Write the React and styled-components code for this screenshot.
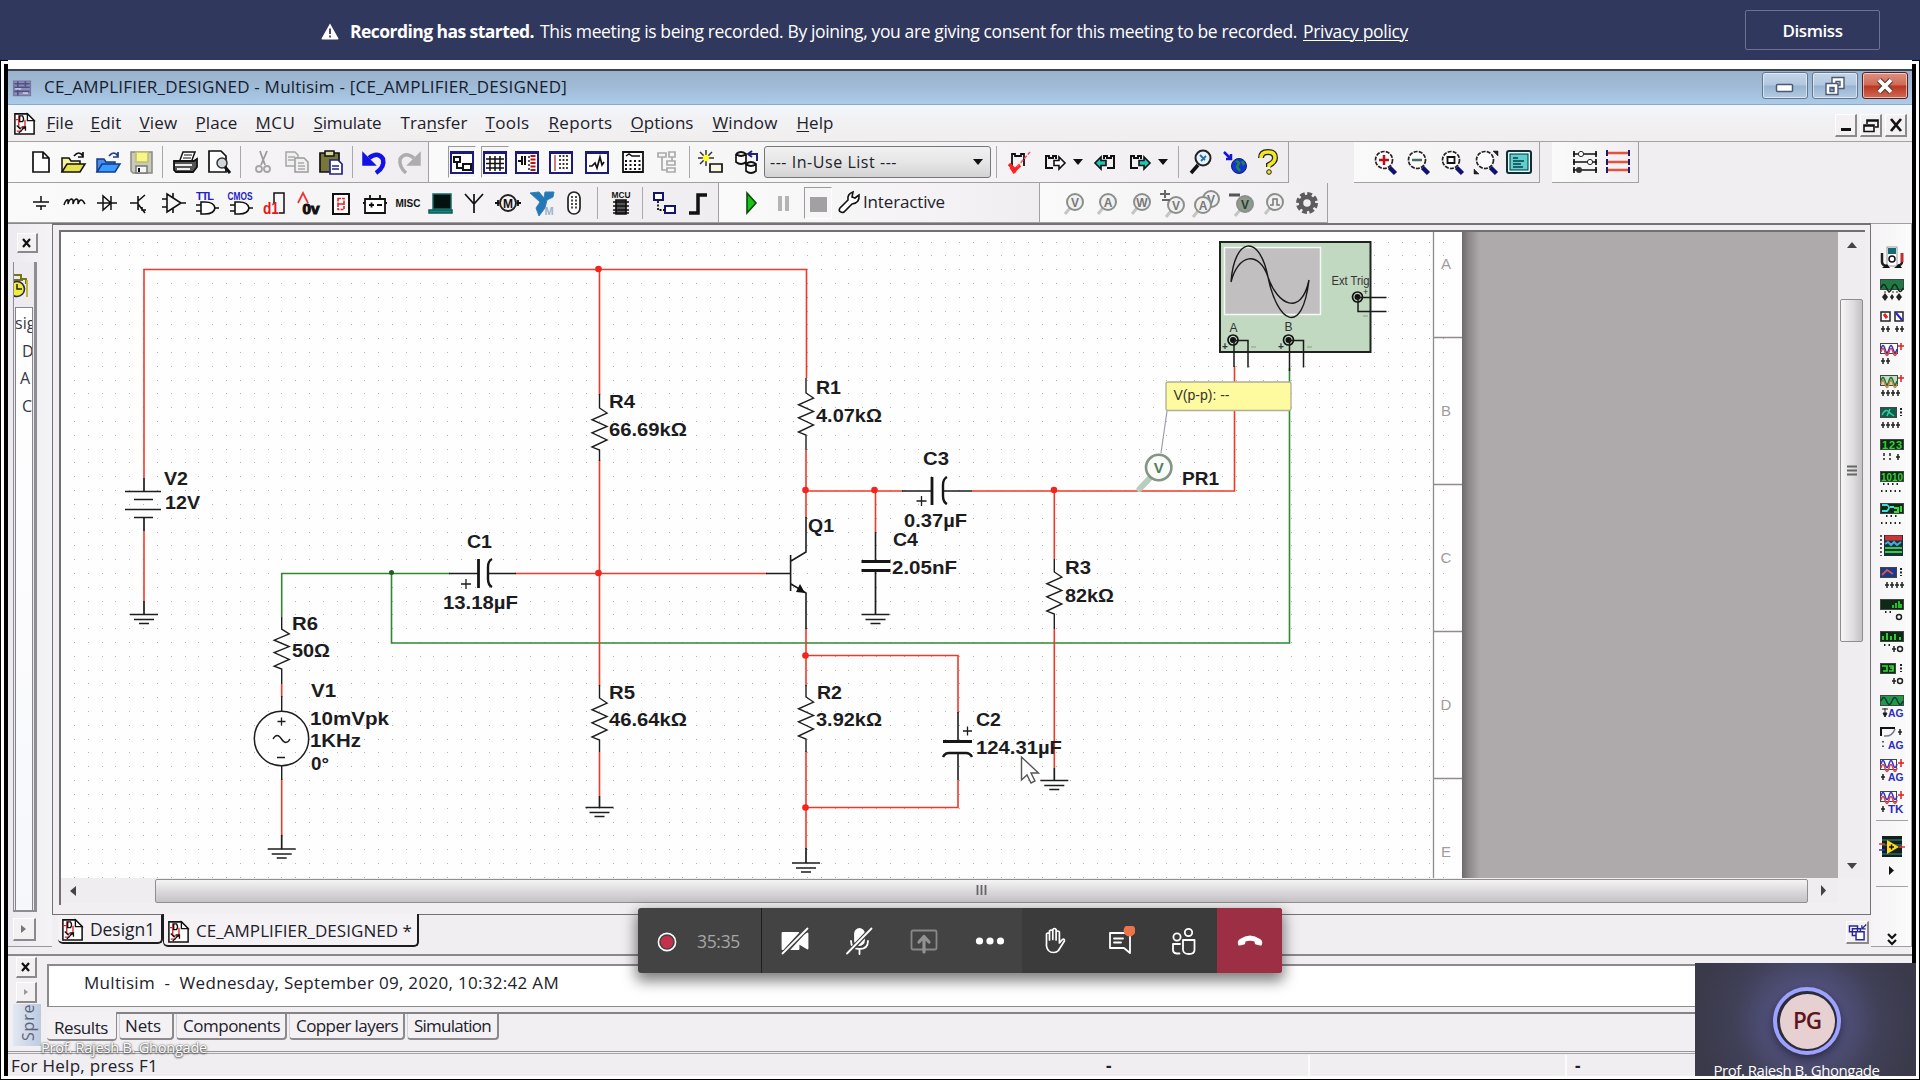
import React, { useLayoutEffect, useRef, useState } from "react";
import styled, { createGlobalStyle, css } from "styled-components";

const UI = `"Open Sans", "Noto Sans", sans-serif`;
const ARIAL = `"Liberation Sans", Arial, sans-serif`;

const Global = createGlobalStyle`
  * { box-sizing: border-box; }
  html, body { margin: 0; padding: 0; background: #fff; overflow: hidden; }
  body { font-family: ${UI}; color: #20212b; }
`;

/* ---------- text that tracks itself to a given measure ---------- */
const TextSpan = styled.span`
  display: inline-block;
  flex: none;
  white-space: pre;
  font-size: ${(p) => p.$size || 17}px;
  font-weight: ${(p) => p.$weight || 400};
  line-height: 1.3;
  u { text-underline-offset: 2px; text-decoration-thickness: 1px; }
`;

function Label({ width, size, weight, children, className }) {
  const ref = useRef(null);
  const [spacing, setSpacing] = useState(0);
  useLayoutEffect(() => {
    const el = ref.current;
    if (!width || !el) return;
    const count = el.textContent.length;
    setSpacing((width - el.getBoundingClientRect().width) / count);
  }, [width]);
  return (
    <TextSpan ref={ref} className={className} $size={size} $weight={weight} style={{ letterSpacing: spacing }}>
      {children}
    </TextSpan>
  );
}

/* ---------- page shell ---------- */
const Screen = styled.div`
  width: 1920px;
  height: 1080px;
  display: flex;
  flex-direction: column;
  overflow: hidden;
  position: relative;
`;
const Banner = styled.header`
  flex: none;
  height: 60px;
  background: #31385e;
  color: #fff;
  display: flex;
  align-items: center;
  padding: 2px 40px 0 321px;
`;
const BannerText = styled.div`
  display: flex;
  flex: 1;
  gap: 6px;
  margin-left: 11px;
`;
const LinkLabel = styled(Label)`
  text-decoration: underline;
  text-underline-offset: 2px;
  text-decoration-thickness: 1px;
`;
const Dismiss = styled.button`
  width: 135px;
  height: 40px;
  margin-bottom: 2px;
  border: 1px solid #6d7290;
  border-radius: 2px;
  background: transparent;
  color: #fff;
  font-family: ${UI};
  padding: 2px 0 0;
`;
const ShareFrame = styled.main`
  flex: 1;
  min-height: 0;
  padding: 4px 3px 3px;
  border: 1px solid #000;
  border-top: 0;
  background: linear-gradient(#000, #000) 0 0 / 7px 1px no-repeat, linear-gradient(#000, #000) 100% 0 / 7px 1px no-repeat, #fff;
`;
const AppWindow = styled.div`
  height: 1012px;
  border: solid #000;
  border-width: 0 4px;
  padding-top: 5px;
  background: #fff;
  display: flex;
  flex-direction: column;
`;

/* ---------- title + menu ---------- */
const TitleBar = styled.div`
  flex: none;
  height: 36px;
  border-top: 2px solid #3b4252;
  border-bottom: 1px solid #8fa9c2;
  background: linear-gradient(#9ab3cd, #9fbad5 45%, #abcbe9);
  display: flex;
  align-items: center;
  padding: 0 4px 0 3px;
`;
const TitleText = styled.div`flex: 1; padding-left: 11px; color: #151c30; display: flex;`;
const WinButtons = styled.div`display: flex; gap: 4px; align-self: flex-start; padding-top: 1px;`;
const WinButton = styled.div`
  width: 46px;
  height: 27px;
  border: 1px solid ${(p) => (p.$close ? "#5b1d22" : "#61778f")};
  border-radius: 3px;
  box-shadow: inset 0 0 0 1px rgba(255, 255, 255, 0.55);
  background: ${(p) => (p.$close
    ? "linear-gradient(#dc9182, #cf6a55 48%, #bb3620 52%, #cf6b55)"
    : "linear-gradient(#c3d5e8, #b2c7df 48%, #98b3d0 52%, #b3cbe4)")};
  display: grid;
  place-items: center;
`;
const MenuBar = styled.nav`
  flex: none;
  height: 37px;
  background: linear-gradient(#f0f7fd, #f2f1f3 40%, #f1eeee);
  border-bottom: 1px solid #a5a2a3;
  display: flex;
  align-items: center;
  padding: 1px 5px 0 4px;
`;
const MenuItem = styled.div`
  flex: none;
  width: ${(p) => p.$w}px;
`;
const MdiButtons = styled.div`display: flex; gap: 3px; margin: 4px 0 0 auto;`;
const SmallButton = styled.div`
  flex: none;
  width: ${(p) => p.$w || 22}px;
  height: ${(p) => p.$h || 23}px;
  border: solid;
  border-width: 1px 2px 2px 1px;
  border-color: #fff #8c898a #8c898a #fff;
  background: #f3f1f2;
  display: grid;
  place-items: center;
  margin-left: ${(p) => p.$ml || 0}px;
  margin-top: ${(p) => p.$mt || 0}px;
`;

/* ---------- toolbars ---------- */
const ToolRow = styled.div`
  flex: none;
  display: flex;
  height: ${(p) => p.$h}px;
  background: #f0eef0;
`;
const ToolGroup = styled.div`
  flex: none;
  width: ${(p) => p.$w}px;
  margin-left: ${(p) => p.$ml || 0}px;
  display: flex;
  align-items: center;
  border: solid #a3a0a2;
  border-width: 0 1px 1px 0;
  background: linear-gradient(90deg, #fafafa, #f4f2f4 70%, #efedef);
`;
const ToolSlot = styled.div`
  flex: none;
  width: 28px;
  height: 32px;
  margin-left: ${(p) => p.$gap}px;
  display: grid;
  place-items: center;
  border: 1px solid transparent;
  ${(p) => p.$pressed && css`
    border-color: #9d9a9d #fff #fff #9d9a9d;
    background: #f7f6f7;
  `}
`;
const Divider = styled.div`
  flex: none;
  width: 1px;
  height: 32px;
  background: #aba8aa;
  margin-left: ${(p) => p.$gap}px;
`;
const Combo = styled.div`
  flex: none;
  width: 227px;
  height: 32px;
  margin-left: ${(p) => p.$gap}px;
  border: 1px solid #75767a;
  border-radius: 3px;
  background: linear-gradient(#f1f1f1, #e6e6e6 50%, #d3d3d3);
  display: flex;
  align-items: center;
  justify-content: space-between;
  padding: 0 7px 0 5px;
`;
const Spacer = styled.div`
  flex: none;
  width: ${(p) => p.$w}px;
  height: ${(p) => (p.$h ? `${p.$h}px` : "auto")};
`;
const CaretSlot = styled.div`
  flex: none;
  width: 10px;
  height: 6px;
  display: flex;
  margin-left: ${(p) => p.$gap}px;
`;

/* ---------- body ---------- */
const Body = styled.div`flex: none; height: 731px; display: flex; background: #f1eef1;`;
const LeftDock = styled.div`
  flex: none;
  width: 44px;
  height: 724px;
  border-bottom: 1px solid #9b989a;
  border-top: 1px solid #8c898a;
  padding: 9px 0 0 5px;
  background: linear-gradient(90deg, #eceaf0, #f4f3f5);
`;
const DockPanel = styled.div`
  width: 24px;
  height: 650px;
  margin-top: 9px;
  border: solid #8e8d92;
  border-width: 0 3px 2px 1px;
  background: #edebef;
  padding-top: 10px;
  overflow: hidden;
`;
const DockList = styled.div`
  margin: 4px 0 0 1px;
  width: 18px;
  height: 608px;
  border: 1px solid #85868b;
  background: linear-gradient(#fff, #f6f7fb);
  padding: 2px 0 0 3px;
  overflow: hidden;
  font-size: 16px;
  line-height: 27.5px;
  color: #343846;
`;
const DockLine = styled.div`white-space: nowrap; margin-left: ${(p) => p.$ml || 0}px;`;
const Center = styled.div`flex: none; width: 1819px; display: flex; flex-direction: column;`;
const MdiFrame = styled.div`
  height: 692px;
  border: solid #757275;
  border-width: 2px 1px 1px 1px;
  padding: 5px 5px 0 6px;
  background: #f1eff1;
`;
const MdiInner = styled.div`
  border: solid #727073;
  border-width: 2px 0 0 2px;
  width: 1806px;
  height: 675px;
  display: grid;
  grid-template-columns: 1777px 27px;
  grid-template-rows: 646px 25px;
`;
const Canvas = styled.div`
  overflow: hidden;
  display: flex;
  background: linear-gradient(90deg, #6f6b6d 1401px, #8d898b 1408px, #aeaaac 1419px, #aeaaac);
`;
const VScroll = styled.div`
  display: flex;
  flex-direction: column;
  align-items: center;
  background: #efedef;
  padding-top: 9px;
`;
const VThumb = styled.div`
  flex: none;
  width: 23px;
  height: 343px;
  margin: 51px 0 221px;
  border: 1px solid #8f8c8f;
  border-radius: 2px;
  background: linear-gradient(90deg, #f8f7f8, #dddbdd 60%, #c4c1c4);
  display: grid;
  place-items: center;
`;
const HScroll = styled.div`
  display: flex;
  align-items: center;
  background: #efedef;
  padding-left: 9px;
`;
const HThumb = styled.div`
  width: 1653px;
  height: 24px;
  margin: 0 13px 0 78px;
  border: 1px solid #918e91;
  border-radius: 2px;
  background: linear-gradient(#f6f5f6, #dbd9db 50%, #c6c3c6);
  display: grid;
  place-items: center;
`;
const Tabs = styled.div`
  flex: 1;
  display: flex;
  align-items: flex-start;
  padding-left: 6px;
`;
const DocTab = styled.div`
  flex: none;
  width: ${(p) => p.$w}px;
  height: ${(p) => (p.$active ? 33 : 30)}px;
  margin-top: -1px;
  border: solid #1d1c1e;
  border-width: ${(p) => (p.$active ? "0 2px 2px 1px" : "1px 2px 2px 0")};
  border-color: ${(p) => (p.$active ? "#1d1c1e" : "#757275 #1d1c1e #1d1c1e #1d1c1e")};
  border-radius: 0 0 5px 5px;
  background: #f4f2f4;
  display: flex;
  align-items: center;
  gap: 5px;
  padding: ${(p) => (p.$active ? "3px 0 0 2px" : "2px 0 0 2px")};
`;
const RightBar = styled.div`
  flex: 1;
  height: 724px;
  border: solid #a09da0;
  border-width: 1px 1px 1px 0;
  background: linear-gradient(90deg, #f5f3f5, #fbfbfb);
  display: flex;
  flex-direction: column;
  align-items: center;
  padding: 18px 0 0 1px;
`;
const Instrument = styled.div`height: 32px; flex: none; display: grid; place-items: center;`;
const Rule = styled.div`height: 1px; flex: none; width: 32px; background: #a5a2a5; margin: ${(p) => p.$m};`;

/* ---------- spreadsheet + status ---------- */
const Sheet = styled.div`
  flex: none;
  height: 97px;
  border-top: 2px solid #8b888b;
  background: #f2eff3;
  display: flex;
`;
const SheetDock = styled.div`flex: none; width: 39px; padding: 1px 0 0 8px; overflow: hidden;`;
const SheetCaption = styled.div`
  margin: 1px 0 0 -3px;
  width: 28px;
  height: 42px;
  background: linear-gradient(90deg, #bccadf, #e2e8f3);
  writing-mode: vertical-rl;
  transform: rotate(180deg);
  font-size: 16px;
  line-height: 30px;
  letter-spacing: 0.8px;
  color: #5b6377;
  overflow: hidden;
  padding-top: 5px;
`;
const SheetMain = styled.div`flex: 1; padding-top: 8px;`;
const Output = styled.div`
  height: 43px;
  border: solid #8d8a8d;
  border-width: 2px 0 1px 2px;
  background: #fff;
  padding: 6px 0 0 35px;
`;
const SheetTabs = styled.div`
  margin-top: 5px;
  border-top: 2px solid #858285;
  display: flex;
  gap: 2px;
`;
const SheetTab = styled.div`
  width: ${(p) => p.$w}px;
  height: ${(p) => (p.$active ? 29 : 26)}px;
  margin-top: ${(p) => (p.$active ? -2 : 0)}px;
  border: solid #8d8a8d;
  border-width: ${(p) => (p.$active ? "0 1px 2px 0" : "0 2px 2px 1px")};
  border-left-color: #d5d3d5;
  border-radius: 0 0 4px 4px;
  background: #f4f1f4;
  display: flex;
  align-items: center;
  padding-left: ${(p) => p.$pl}px;
  padding-top: ${(p) => (p.$active ? 5 : 0)}px;
`;
const Status = styled.div`
  flex: 1;
  overflow: hidden;
  border-top: 1px solid #98959a;
  background: #f0eef0;
  display: flex;
`;
const StatusInner = styled.div`
  flex: 1;
  display: flex;
  border-top: 1px solid #a7a4a8;
  margin-top: 1px;
  padding: 1px 0 0 3px;
`;
const StatusCell = styled.div`
  width: ${(p) => p.$w}px;
  padding-left: ${(p) => p.$pl || 0}px;
  border-left: ${(p) => (p.$line ? "2px solid #fbfafb" : "0")};
`;
const StatusText = styled(Label)`line-height: 21px;`;
const Dash = styled(Label)`line-height: 20px;`;

/* ---------- overlays ---------- */
const CallBar = styled.div`
  position: absolute;
  left: 638px;
  top: 908px;
  width: 644px;
  height: 65px;
  border-radius: 3px;
  overflow: hidden;
  display: flex;
  background: #434343;
`;
const CallShadow = styled.div`
  position: absolute;
  left: 638px;
  top: 908px;
  width: 644px;
  height: 65px;
  border-radius: 3px;
  box-shadow: 0 6px 14px 2px rgba(0, 0, 0, 0.5);
`;
const Recorder = styled.div`
  width: 124px;
  border-right: 1px solid #1f1f1f;
  display: flex;
  align-items: center;
  padding: 2px 0 0 19px;
  gap: 20px;
  color: #a6a6a6;
`;
const CallButtons = styled.div`
  width: ${(p) => p.$w}px;
  background: ${(p) => p.$bg};
  display: grid;
  grid-template-columns: ${(p) => p.$cols};
  place-items: center;
`;
const Participant = styled.div`
  position: absolute;
  left: 1695px;
  top: 963px;
  width: 221px;
  height: 113px;
  overflow: hidden;
  background: radial-gradient(circle at 112px 58px, #565585 0, #4f4f78 38px, #3f3f56 75px, #3b3a4b 110px);
  color: #fff;
  display: flex;
  flex-direction: column;
  align-items: center;
  padding: 24px 0 0 3px;
`;
const Avatar = styled.div`
  flex: none;
  width: 68px;
  height: 68px;
  border-radius: 50%;
  border: 4px solid #9ea2ff;
  background: #2c2b3a;
  padding: 2.5px;
  box-shadow: 0 4px 10px rgba(0, 0, 0, 0.45);
  margin-bottom: 6px;
`;
const AvatarFace = styled.div`
  width: 55px;
  height: 55px;
  border-radius: 50%;
  background: #e7d0d1;
  color: #5c1520;
  display: grid;
  place-items: center;
`;
const TileName = styled(Label)`margin-right: 21px;`;
const Presenter = styled.div`
  position: absolute;
  left: 41px;
  top: 1036px;
  color: #fff;
  text-shadow: 0 0 2px #444, 0 1px 2px #555;
`;

/* ---------- icon drawings, 26 x 26 box ---------- */
const L = ({ d, c = "#111", w = 1.5, f = "none", ...r }) => <path d={d} stroke={c} strokeWidth={w} fill={f} {...r} />;
const T = ({ x = 13, y, s, c = "#111", children, ...r }) => (
  <text x={x} y={y} fontSize={s} fill={c} textAnchor="middle" fontFamily={ARIAL} fontWeight="700" {...r}>{children}</text>
);
const Probe = ({ c = "#8b8f8b", ch, dark, x = 13, y = 12, extra }) => (
  <>
    <L d={`M${x - 5} ${y + 6}l-5 6`} c="#c3c6c3" w={3} />
    <circle cx={x} cy={y} r="8" fill={dark ? "#8f9b8f" : "#f1f1f1"} stroke={c} strokeWidth="2" />
    {ch && <T x={x} y={y + 4.5} s={12} c={dark ? "#2e3b2e" : "#777"}>{ch}</T>}
    {extra}
  </>
);
const Lens = ({ children }) => (
  <>
    <L d="M17.500 18.500l6 6" c="#101070" w={4.500} />
    <circle cx="12" cy="11" r="8.500" fill="#fbfbfb" stroke="#222" strokeWidth="1.700" strokeDasharray="4 1.200" />
    {children}
  </>
);
const Framed = ({ children }) => (
  <>
    <rect x="2" y="3" width="22" height="21" fill="#fff" stroke="#1b1b7a" strokeWidth="2" />
    <L d="M2 3.500h22" c="#1b1b7a" w={3} />
    {children}
  </>
);
const Schem = (
  <>
    <L d="M3 3h13l7 7v14h-20z" f="#fff" w={1.600} />
    <L d="M16 3v7h7z" f="#fff" w={1.400} />
    <L d="M7 4.500v13M3 9h4M7 17.500h5M13.500 9v9h-3M5 21h5" c="#d22" w={1.400} />
    <L d="M8 5v6h3q2-3 0-6zM7 23l7-7M10 16.500h4v4M5 15l4 4" w={1.400} />
  </>
);
const Chain = ({ f, flip }) => (
  <g transform={flip ? "translate(26 0) scale(-1 1)" : undefined}>
    <L d="M11 19h-7v-12h3v2h4v-2h3v3" w={2} />
    <L d="M12 11.500h5v-3.500l6 6l-6 6v-3.500h-5z" f={f} w={1.600} />
  </g>
);
const Gate = <L d="M8 12h4q9 0 10 6q-1 6-10 6h-4zM3 15h5M3 21h5M22 18h4" f="#fff" w={1.600} />;

const icons = {
  app: <><L d="M3 5h20v17h-20z" f="#8d8cb5" c="#77779f" /><L d="M4 8h18M4 12h18M4 17h18M8 5v17M17 5v6" c="#4d4f85" w={1.800} /><L d="M5 14h7M14 19h6" c="#c7c4dd" w={2} /></>,
  schem: Schem,
  new: <L d="M5 3h10l6 6v14h-16zM15 3v6h6" f="#fff" w={1.700} />,
  open: <><L d="M2 23v-14h7l2 3h9v4" f="#f6f39a" /><L d="M2 23l5-8h18l-5 8z" f="#e8e24f" /><L d="M14 7q5-6 9 0M23 3v5h-5" w={1.700} /></>,
  openB: <><L d="M2 23v-13h7l2 3h9v3" f="#4a8fe8" c="#123c8c" /><L d="M2 23l5-8h18l-5 8z" f="#3c9bff" c="#123c8c" /><L d="M14 7q5-6 9 0M23 3v5h-5" c="#223a88" w={1.700} /></>,
  save: <><L d="M3 3h21v21h-19l-2-2z" f="#c9c9bd" c="#8b8b80" /><L d="M8 3h12v10h-12z" f="#f7f686" c="#bdbd6d" /><L d="M8 17h11v7h-11z" f="#f4f4f4" c="#777" /><L d="M11 19v4" w={2} /></>,
  print: <><L d="M8 11l3-8h12l-3 8" f="#fff" /><L d="M12 6h8M11 9h8" w={1} /><L d="M2 12h20l3-2v8l-4 5h-17l-2-2z" f="#555" w={1.800} /><L d="M3 16h17M5 20h13" c="#eee" w={1.800} /></>,
  preview: <><L d="M3 2h12l5 5v16h-17z" f="#fff" w={1.700} /><circle cx="16" cy="14" r="5" fill="#cfd6dc" stroke="#333" strokeWidth="1.500" /><L d="M19 18l5 6" w={3} /></>,
  cut: <><L d="M10 2l5 14M17 2l-6 14" c="#9b9b9b" w={1.800} /><circle cx="9" cy="20" r="3" fill="none" stroke="#a5a5a5" strokeWidth="1.800" /><circle cx="17" cy="20" r="3" fill="none" stroke="#a5a5a5" strokeWidth="1.800" /></>,
  copy: <><L d="M2 3h9l3 3v11h-12z" f="#f0f0f0" c="#a5a5a5" /><L d="M11 9h9l4 4v10h-13z" f="#f0f0f0" c="#9b9b9b" /><L d="M4 8h7M4 11h6M14 14h6M14 17h7M14 20h7" c="#aaa" /></>,
  paste: <><L d="M3 4h19v19h-19z" f="#77773a" w={1.700} /><L d="M8 2h9v5h-9z" f="#d8d79a" /><L d="M13 11h8l4 4v10h-12z" f="#fff" c="#22228a" w={1.700} /><L d="M15 17h7M15 20h7" c="#22228a" /></>,
  undo: <><L d="M8 9q9-7 14 1q2 8-7 14" c="#1111e8" w={4.500} /><L d="M2 4v12h12z" f="#1111e8" c="#1111e8" /></>,
  redo: <><L d="M18 9q-9-7-14 1q-1 8 6 14" c="#adadad" w={3.500} /><L d="M24 4v12h-12z" f="#adadad" c="#adadad" /></>,
  v1: <Framed><L d="M5 8h6v5h-6zM14 15h8v6h-8zM8 13v6h6" w={2} /></Framed>,
  v2: <Framed><L d="M8 7v15M13 7v15M18 7v15M4 10h18M4 14.500h18M4 19h18" w={1.500} /></Framed>,
  v3: <Framed><L d="M4 12h4M8 7v9M11 7v9" w={2} /><L d="M19 6v17" c="#b11" w={5} strokeDasharray="2 1.500" /><L d="M15 7v14" c="#222" strokeDasharray="2 2" /></Framed>,
  v4: <Framed><L d="M7 6v16" c="#b55" /><L d="M12 6v16M15.500 6v16M19 6v16" c="#333" w={1.800} strokeDasharray="2 2" /></Framed>,
  v5: <Framed><L d="M5 17h3l3-3l2 5l3-11l2 8l2-3" w={1.700} /></Framed>,
  v6: <><L d="M3 3h20v20h-20z" f="#fff" w={1.800} /><L d="M6 7l3-2l3 2h8" /><L d="M5 12h17M5 16h17M5 20h17" w={2.200} strokeDasharray="2 2.500" /></>,
  v7: <L d="M4 4h8v4h-8zM15 3h6v5h-6zM8 8v13h5M13 12h8v4h-8zM13 19h8v4h-8zM18 8v4" c="#aaa" w={1.700} />,
  star: <><L d="M8 1v5M8 12v5M0 9h5M11 9h5M2 3l4 4M14 3l-4 4M2 15l4-4" c="#333" w={1.500} /><circle cx="8" cy="9" r="3.200" fill="#ffff22" /><L d="M12 15h12v8h-12z" f="#f9f7e2" w={1.700} /></>,
  db: <><L d="M3 5v8q5 4 10 0v-8M3 5q5-4 10 0q-5 4-10 0M13 15v7q5 4 10 0v-7q-5-4-10 0q5 4 10 0" f="#fff" w={1.700} /><L d="M16 5h8v7M19 2l-4 3l4 3" c="#22227c" w={2} /></>,
  check: <><L d="M6 19v-14h3v2h6v-2h3v12" w={1.800} /><L d="M3 15l6 6l5-5M5 18l4 6" c="#f22" w={3.500} /><L d="M11 18l13-15" c="#f55" w={1.500} strokeDasharray="4 1.500" /></>,
  chainW: <Chain f="#fff" />,
  chainL: <Chain f="#1cc7b5" flip />,
  chainR: <Chain f="#1cc7b5" />,
  find: <><L d="M10 16l-7 8" w={3.500} /><circle cx="15" cy="9" r="7.500" fill="#e7f3f8" stroke="#222" strokeWidth="2" /><L d="M12 6l5 5M13 12l5-5" c="#2a6fae" w={1.800} /></>,
  globe: <><circle cx="17" cy="17" r="7.500" fill="#1733d8" stroke="#102070" /><L d="M14 12l3 2l-2 4l3 4M20 12l2 4" c="#188a3c" w={2.600} /><L d="M2 3l7 7M9 5v5h-5" c="#1717d0" w={2.500} /></>,
  help: <><L d="M6 9q0-6 7-6t7 6q0 4-6 7v2" c="#222" w={6} /><L d="M6 9q0-6 7-6t7 6q0 4-6 7v2" c="#f2ea1e" w={3.500} /><circle cx="14" cy="23" r="2.300" fill="#f2ea1e" stroke="#222" /></>,
  zin: <Lens><L d="M7 11h10M12 6v10" c="#b3121c" w={2.500} /></Lens>,
  zout: <Lens><L d="M7 11h10" c="#46705a" w={2.500} /></Lens>,
  zarea: <Lens><L d="M8.500 8h7v6h-7z" w={1.800} /></Lens>,
  zfit: <><Lens /><L d="M20 2h5v5zM1 20v5h5z" f="#222" w={0.500} /></>,
  full: <><rect x="1" y="2" width="24" height="22" rx="2" fill="#dff" stroke="#0d2f33" strokeWidth="2" /><rect x="4" y="5" width="18" height="16" fill="#5fd0d0" stroke="#0d2f33" /><L d="M7 9h5M7 12h11M7 15h8M7 18h10" c="#0d3f44" /></>,
  wires: <><L d="M1 5h24M1 13h24M1 21h24" w={1.700} /><L d="M2 2v6M24 2v6M2 10v6M24 10v6M2 18v6M24 18v6" w={1.700} /><circle cx="9" cy="5" r="2.600" fill="#fff" stroke="#222" /><circle cx="18" cy="13" r="2.600" fill="#fff" stroke="#222" /><circle cx="7" cy="21" r="3" fill="#333" /></>,
  wiresR: <><L d="M1 4h24M1 13h24M1 21h24" c="#e8503c" w={2.500} /><L d="M2 1v6M24 1v6M2 10v6M24 10v6M2 18v6M24 18v6" c="#1c1c66" w={2} /></>,
  gnd: <L d="M13 6v6M5 12h16M8 16h10M13 16v4" w={1.500} />,
  coil: <L d="M2 15q2-6 4-5l0 4q2-7 5-4l0 4q2-7 5-4l0 4q2-6 5-3l2 3" w={1.500} />,
  diode: <L d="M3 13h20M9 6v14l8-7zM17 6v14" w={1.500} />,
  bjt: <L d="M3 13h8M11 6v14M11 11l7-6M11 14l7 9M15 17v3h4" w={1.600} />,
  opamp: <L d="M7 4v18l14-9zM2 9h5M2 17h5M21 13h5M13 3v5M13 18v5" w={1.600} f="none" />,
  ttl: <>{Gate}<T x={12} y={10} s={11} c="#2222c8" textLength="18">TTL</T></>,
  cmos: <>{Gate}<T x={13} y={10} s={11.500} c="#2222c8" textLength="25" lengthAdjust="spacingAndGlyphs">CMOS</T></>,
  misD: <><L d="M12 13v-10h10v20h-5" w={1.500} /><T x={9} y={24} s={17} c="#e31818" textLength="16" lengthAdjust="spacingAndGlyphs">d1</T></>,
  mixed: <><L d="M3 13l5-10l5 10" c="#e33" w={1.700} /><T x={16} y={24} s={14} textLength="17" lengthAdjust="spacingAndGlyphs" stroke="#111" strokeWidth="1">0v</T></>,
  seg: <><L d="M5 4h16v20h-16z" f="#fff" w={2} /><L d="M10 8.500h6v5.500h-6zM10 14h6v5.500h-6z" c="#e22" w={1.600} strokeDasharray="3 1" /></>,
  power: <><L d="M3 9h20v14h-20z" w={1.800} f="#fff" /><L d="M8 9v-4M18 9v-4M7 15h5M9.500 12.500v5M15 15h5M1 13h2M23 13h2" w={1.800} /></>,
  misc: <T y={17} s={10} textLength="25" lengthAdjust="spacingAndGlyphs">MISC</T>,
  monitor: <><L d="M5 4h18v15h-18z" f="#04120f" c="#156a64" /><L d="M1 20h23v3h-23z" f="#168b82" c="#0c5a55" /></>,
  antenna: <L d="M13 23v-9M4 4l9 10l9-10M13 4v10" w={1.700} />,
  motor: <><circle cx="13" cy="13" r="8" fill="none" stroke="#222" strokeWidth="2" /><T y={17.500} s={12}>M</T><L d="M0 13h4M22 13h4M3 10v6M23 10v6" w={1.800} /></>,
  ni: <><L d="M1 3l9-1l5 6l1-6h9l-1 5l-6 3l-2 8l-6 8l-3-8l4-6z" f="#2478b5" c="#2f83c0" w={1} /><T x={20} y={25} s={11} c="#9bb4c8">M</T></>,
  conn: <><rect x="7" y="2" width="12" height="22" rx="6" fill="#fff" stroke="#222" strokeWidth="1.700" /><L d="M11 6v14M15 6v14" strokeDasharray="2 1.500" /></>,
  mcu: <><T y={8} s={8.500} textLength="19" lengthAdjust="spacingAndGlyphs">MCU</T><L d="M8 10h10v14h-10z" f="#555" w={1.700} /><L d="M5 12h16M5 16h16M5 20h16M5 23h16" w={1.300} /></>,
  hier: <><L d="M2 3h9v7h-9zM13 16h10v7h-10z" f="#fff" c="#15156a" w={2} /><L d="M6 11v9h7" w={1.800} strokeDasharray="2 1.500" /></>,
  bus: <L d="M4 23h9v-18h9" w={3.500} />,
  play: <L d="M9 3l9 10l-9 10z" f="#16c41a" c="#0b4a0d" w={1.600} />,
  pause: <><rect x="7" y="6" width="4" height="15" fill="#b5b3b5" /><rect x="14" y="6" width="4" height="15" fill="#b5b3b5" /></>,
  stop: <rect x="5" y="7" width="17" height="15" fill="#a3a0a3" />,
  wrench: <L d="M5 22q-3-1-1-4l8-8q-1-6 5-8l-1 5l3 1l4-3q1 8-7 9l-8 8q-2 1-3 0z" f="#fff" w={1.600} />,
  pV: <Probe ch="V" />,
  pA: <Probe ch="A" />,
  pW: <Probe ch="W" />,
  pD: <Probe ch="V" x={17} y={15} extra={<L d="M1 4h10M6 0v8M3 10h8" c="#666" w={2} />} />,
  pAV: <><Probe ch="V" x={18} y={9} /><Probe ch="A" x={10} y={15} /></>,
  pR: <Probe ch="V" dark x={16} y={14} extra={<L d="M0 5h11" c="#555" w={3} />} />,
  pS: <><Probe /><L d="M8 15h3v-6h4v6h3" c="#777" /></>,
  gear: <><circle cx="13" cy="13" r="8.500" fill="none" stroke="#5c5c5c" strokeWidth="5" strokeDasharray="4.400 2.270" /><circle cx="13" cy="13" r="6" fill="none" stroke="#5c5c5c" strokeWidth="4.500" /></>,
  cascade: <><L d="M2 4h11v8h-11zM6 8h11v9h-11z" f="#fff" c="#26269a" w={2} /><L d="M11 12h11v11h-11z" f="#fff" c="#26269a" w={2} /><L d="M25 2l-6 6M19 3v5h5" c="#26269a" w={1.800} /></>,
};
const IconSvg = styled.svg`overflow: visible; flex: none;`;
const Icon = ({ name, size = 26 }) => <IconSvg width={size} height={size} viewBox="0 0 26 26">{icons[name]}</IconSvg>;

const Caret = () => <svg width="10" height="6" viewBox="0 0 10 6"><path d="M0 0h10l-5 6z" fill="#111" /></svg>;

/* Slots keep their distance from the previous control in the group. */
function Tools({ start, items }) {
  let edge = start;
  return items.map((it, i) => {
    const w = it.type === "sep" ? 1 : it.type === "combo" ? 227 : it.type === "caret" ? 10 : 28;
    const left = it.type === "combo" ? it.at : it.at - w / 2;
    const gap = left - edge;
    edge = left + w;
    if (it.type === "sep") return <Divider key={i} $gap={gap} />;
    if (it.type === "combo")
      return <Combo key={i} $gap={gap}><Label size={16} width={127}>--- In-Use List ---</Label><Caret /></Combo>;
    if (it.type === "caret") return <CaretSlot key={i} $gap={gap}><Caret /></CaretSlot>;
    return <ToolSlot key={i} $gap={gap} $pressed={it.pressed}><Icon name={it.n} /></ToolSlot>;
  });
}
const t = (n, at, pressed) => ({ n, at, pressed });
const sep = (at) => ({ type: "sep", at });
const caret = (at) => ({ type: "caret", at });

const standard = [
  t("new", 40.5), t("open", 73), t("openB", 108), t("save", 141), sep(162), t("print", 184.5), t("preview", 219), sep(240),
  t("cut", 263), t("copy", 297), t("paste", 330), sep(352), t("undo", 373.5), t("redo", 409),
];
const viewTools = [
  t("v1", 462, true), t("v2", 495, true), t("v3", 527), t("v4", 561), t("v5", 597), t("v6", 633), t("v7", 667), sep(689),
  t("star", 711), t("db", 746), { type: "combo", at: 764 }, sep(996), t("check", 1019), t("chainW", 1055), caret(1078),
  t("chainL", 1105), t("chainR", 1140), caret(1163), sep(1178), t("find", 1201), t("globe", 1235), t("help", 1268),
];
const zoomTools = [t("zin", 1385), t("zout", 1418), t("zarea", 1452), t("zfit", 1486), t("full", 1519)];
const wireTools = [t("wires", 1585), t("wiresR", 1618)];
const components = [
  t("gnd", 40.5), t("coil", 74.5), t("diode", 107), t("bjt", 140), t("opamp", 173), t("ttl", 206), t("cmos", 240),
  t("misD", 275), t("mixed", 307.5), t("seg", 340.5), t("power", 375), t("misc", 408), t("monitor", 441), t("antenna", 474),
  t("motor", 508), t("ni", 542), t("conn", 574), sep(597), t("mcu", 621), sep(642), t("hier", 665), t("bus", 698),
];
const simTools = [t("play", 751), t("pause", 784), t("stop", 818, true), t("wrench", 849)];
const probeTools = [
  t("pV", 1075), t("pA", 1108), t("pW", 1142), t("pD", 1172), t("pAV", 1206), t("pR", 1242), t("pS", 1275), t("gear", 1307),
];

const menus = [
  ["File", 0, 44, 27], ["Edit", 0, 49, 31], ["View", 0, 56, 38], ["Place", 0, 60, 42], ["MCU", 0, 58, 40],
  ["Simulate", 0, 87, 68], ["Transfer", 3, 85, 67], ["Tools", 0, 63, 44], ["Reports", 0, 82, 64], ["Options", 0, 82, 63],
  ["Window", 0, 84, 65], ["Help", 0, 60, 37],
];

/* ---------- schematic, drawn in window coordinates ---------- */
const RED = "#f03a28";
const GREEN = "#2f8a2e";
const INK = "#1d1d1d";

const gridPath = (() => {
  let d = "";
  for (let i = 0; i < 101; i++)
    for (let j = 0; j < 47; j++) {
      const x = Math.round(73.9 - 13.83 + i * 13.83);
      const y = Math.round(241.5 + j * 13.81);
      if (x < 1460) d += `M${x} ${y}h1v1h-1z`;
    }
  return d;
})();

const Wire = ({ d, c = RED }) => <path d={d} stroke={c} strokeWidth="1.6" fill="none" />;
const Dot = ({ x, y, c = "#f4231c" }) => <circle cx={x} cy={y} r="3.3" fill={c} />;
const Ground = ({ x, y, from }) => (
  <path d={`M${x} ${from}V${y}M${x - 14} ${y}h28M${x - 10} ${y + 5}h20M${x - 5} ${y + 9}h10`} stroke={INK} strokeWidth="1.7" fill="none" />
);
const Resistor = ({ x, top, y, end, h = 42 }) => (
  <path
    d={`M${x} ${top}V${y}l7.500 ${h * 0.12}l-15 ${h * 0.16}l15 ${h * 0.16}l-15 ${h * 0.15}l15 ${h * 0.17}l-15 ${h * 0.17}l7.500 ${h * 0.07}V${end}`}
    stroke={INK} strokeWidth="1.4" fill="none"
  />
);
const Plus = ({ x, y, s = 5 }) => <path d={`M${x - s} ${y}h${2 * s}M${x} ${y - s}v${2 * s}`} stroke={INK} strokeWidth="1.3" />;
const Jack = ({ x, y }) => (
  <>
    <circle cx={x} cy={y} r="5" fill="none" stroke="#111" strokeWidth="1.7" />
    <circle cx={x} cy={y} r="3" fill="#111" />
  </>
);

const captions = [
  ["V2", 164, 24, 485], ["12V", 165, 35, 509], ["R4", 609, 26, 408], ["66.69kΩ", 609, 78, 436], ["R1", 816, 25, 394],
  ["4.07kΩ", 816, 66, 422], ["C3", 923, 26, 465], ["0.37µF", 904, 63, 526.500], ["C4", 893, 25, 546], ["2.05nF", 892, 65, 574],
  ["Q1", 808, 26, 532], ["R3", 1065, 26, 574], ["82kΩ", 1065, 49, 601.500], ["C1", 467, 25, 547.500], ["13.18µF", 443, 75, 609],
  ["R6", 292, 26, 629.500], ["50Ω", 292, 38, 656.500], ["V1", 311, 25, 697], ["10mVpk", 310, 79, 724.500], ["1KHz", 310, 51, 747],
  ["0°", 311, 18, 770], ["R5", 609, 26, 698.500], ["46.64kΩ", 609, 78, 726], ["R2", 817, 25, 698.500], ["3.92kΩ", 816, 66, 726],
  ["C2", 976, 25, 726], ["124.31µF", 976, 86, 753.500], ["PR1", 1182, 37, 485],
];
const borderLetters = [["A", 269], ["B", 416], ["C", 563], ["D", 710], ["E", 857]];

const Schematic = () => (
  <svg width="1777" height="646" viewBox="61 232 1777 646">
    <rect x="61" y="232" width="1401" height="646" fill="#fffefe" />
    <path d={gridPath} fill="#b6b0ba" />
    <path d="M1433.500 232V878M1433 337.500h29M1433 484.500h29M1433 631.500h29M1433 778.500h29" stroke="#8f8b8f" strokeWidth="1.300" fill="none" />
    {borderLetters.map(([ch, y]) => (
      <text key={ch} x="1446" y={y} fontSize="15" textAnchor="middle" fill="#a09ca0" fontFamily={ARIAL}>{ch}</text>
    ))}

    <Wire c={GREEN} d="M281.700 617V573.500H450M391.500 573V643H1289.500V368" />
    <Wire d="M144 478V269.500H806.500V378M144 531V601M599.500 269V395M599.500 460V686M599.500 752V796M515 573.500H767" />
    <Wire d="M806 450V518M806 628V686M806 751V849M806 655.500H958V713M958 780V807.500H806M806 491H903M972 491H1234.500V366" />
    <Wire d="M875.500 491V532M1054.300 491V559M1054.300 629V768M281.700 684V697M281.700 779V836" />

    <path d="M144 478V491M125 491.500h36M134 499.500h19M125 509.500h36M134 517.500h19M144 517.500V531" stroke={INK} strokeWidth="1.700" fill="none" />
    <Resistor x={599.5} top={394} y={408} end={461} />
    <Resistor x={806} top={378} y={393} end={450} />
    <Resistor x={599.5} top={685} y={698} end={752} />
    <Resistor x={806} top={685} y={697} end={752} />
    <Resistor x={1054.3} top={559} y={572} end={629} />
    <Resistor x={281.700} top={617} y={629} end={684} h={40} />
    <Ground x={144} y={614.5} from={601} />
    <Ground x={281.700} y={849} from={835} />
    <Ground x={599.5} y={807.5} from={796} />
    <Ground x={806} y={863} from={848} />
    <Ground x={875.5} y={614.5} from={570} />
    <Ground x={1054.3} y={780.5} from={768} />

    <path d="M281.700 696V711M281.700 766V780M273 739q4-7 8.500 0t8.500 0M277 757.500h8" stroke={INK} strokeWidth="1.400" fill="none" />
    <circle cx="281.500" cy="738.500" r="27.200" fill="none" stroke={INK} strokeWidth="1.500" />
    <Plus x={281.500} y={721.5} s={4} />

    <path d="M449 573.500H478M489 573.500H516M902 491H932M944 491H972M875.500 532V561M958 712V741M958 753V780" stroke={INK} strokeWidth="1.600" />
    <path d="M478.500 559v29M932 477v28M861.500 561.500h29M861.500 570.500h29M943 741.500h29" stroke="#161616" strokeWidth="2.800" />
    <path d="M492 559q-4 2-4 8v12q0 6 4 8M947 477q-4 2-4 8v11q0 6 4 8M943 757q2-4 6-4h17q4 0 6 4" stroke="#161616" strokeWidth="2.400" fill="none" />
    <Plus x={466} y={584} />
    <Plus x={921.5} y={501} />
    <Plus x={967.5} y={731} s={4.500} />

    <path d="M806 517V552l-15 9M790.600 555V591M766 573.500H790.600M791 584l15 9V629" stroke={INK} strokeWidth="1.600" fill="none" />
    <path d="M805 593l-9-1l4-8z" fill="#111" />

    <Dot x={598.5} y={269} /><Dot x={598.5} y={573} /><Dot x={805.5} y={490} /><Dot x={874.5} y={490} />
    <Dot x={1054} y={490} /><Dot x={805.5} y={655.5} /><Dot x={805.5} y={807.5} />
    <circle cx="391.500" cy="572.500" r="2.500" fill="#275a28" />

    <rect x="1220" y="242" width="150.500" height="110" fill="#c1d8c1" stroke="#20241f" strokeWidth="2" />
    <rect x="1224.500" y="247.500" width="96" height="67" fill="#c2bfc1" stroke="#f6f8f6" strokeWidth="1.500" />
    <path d="M1231 282C1234 238 1259 232 1268 277S1302 338 1309 280M1231 282C1238 254 1259 250 1268 277S1301 318 1309 280" stroke="#1a1a1a" strokeWidth="1.400" fill="none" />
    <g fontFamily={ARIAL} fill="#333" fontSize="12">
      <text x="1331.500" y="284.500" textLength="38" lengthAdjust="spacingAndGlyphs">Ext Trig</text>
      <text x="1229.500" y="331.500">A</text>
      <text x="1284.500" y="330.500">B</text>
      <text x="1222" y="350" fontSize="10" fontWeight="700">+</text>
      <text x="1278" y="350" fontSize="10" fontWeight="700">+</text>
      <text x="1363" y="295" fontSize="9">+</text>
      <path d="M1251 347h5M1307 347h5M1363 316h5" stroke="#889d88" />
    </g>
    <Jack x={1233} y={340} /><Jack x={1288.500} y={340} /><Jack x={1357.500} y={297} />
    <path d="M1234 340V367M1234 340.500H1248V367.500M1289.500 340V371M1289 340.500H1303.500V367.500M1358 297.500H1386.500M1358 297V311.500H1386.500" stroke="#1a1a1a" strokeWidth="1.500" fill="none" />

    <rect x="1166" y="382" width="125" height="28.500" rx="2" fill="#fdfa9f" stroke="#aeaf98" strokeWidth="1.300" />
    <text x="1173.500" y="399.500" fontFamily={ARIAL} fontSize="14" fill="#333" textLength="56">V(p-p): --</text>
    <path d="M1167 411L1161 453" stroke="#9d9fae" strokeWidth="1.200" />
    <path d="M1149 479L1139.500 489" stroke="#b8cdbd" strokeWidth="6" strokeLinecap="round" />
    <circle cx="1158.700" cy="467.500" r="12.700" fill="#f8fbf8" stroke="#849487" strokeWidth="2.600" />
    <text x="1158.700" y="473" fontFamily={ARIAL} fontSize="15" fontWeight="700" textAnchor="middle" fill="#557a5e">V</text>

    <g fontFamily={ARIAL} fontWeight="700" fontSize="18.500" fill="#1c1c1e">
      {captions.map(([s, x, w, y]) => <text key={s} x={x} y={y} textLength={w} lengthAdjust="spacingAndGlyphs">{s}</text>)}
    </g>
    <path d="M1021.500 757v23l5.500-5l4 8l4-2l-4-8h7.500z" fill="#fff" stroke="#555" strokeWidth="1.400" />
  </svg>
);

/* ---------- instrument strip ---------- */
const Pins = ({ x = 3, n = 5, y = 18 }) => (
  <path d={Array.from({ length: n }, (_, i) => `M${x + i * 5} ${y - 3}v6M${x - 2 + i * 5} ${y}h4`).join("")} stroke="#222" strokeWidth="1.5" />
);
const Wave = ({ x = 1, w = 16, y = 6, c }) => (
  <path d={`M${x} ${y + 3}q${w / 8}-7 ${w / 4} 0t${w / 4} 0t${w / 4} 0t${w / 4} 0`} stroke={c} strokeWidth="1.5" fill="none" />
);
const Top = ({ fill = "#0d2a16", w = 23 }) => <rect x="0.500" y="0.500" width={w} height="10" fill={fill} stroke="#444" />;
const agText = { fontFamily: ARIAL, fontWeight: 700, fontSize: 10.5, fill: "#2a2ac0", textLength: 15.5, lengthAdjust: "spacingAndGlyphs" };
const instruments = [
  <><path d="M2 6v9q0 3 4 4M22 6v9q0 3-5 4" stroke="#222" strokeWidth="2.500" fill="none" /><path d="M22 6v9" stroke="#d22" strokeWidth="2.500" /><rect x="7" y="0" width="10" height="19" fill="#fff" stroke="#999" /><path d="M8 1h8v6h-8z" fill="#126b74" /><circle cx="12" cy="12" r="3" stroke="#111" strokeWidth="1.500" fill="none" /><path d="M2 21l5-4l3 4zM14 21l5-4l3 4z" fill="#111" /></>,
  <><Top fill="#1f7a45" /><Wave w={22} c="#0c2e18" /><path d="M4 13h15" stroke="#222" strokeDasharray="2 2" /><path d="M2 18l3-4l3 4l-3 4zM10 18l2-3l2 3l-2 3zM16 18l3-4l3 4l-3 4z" fill="#222" /></>,
  <><rect x="1" y="1" width="9" height="9" fill="#fff" stroke="#222" strokeWidth="1.500" /><rect x="15" y="1" width="8" height="9" fill="#fff" stroke="#222" strokeWidth="1.500" /><path d="M4 3l3 4" stroke="#d22" strokeWidth="3" /><path d="M16 2l6 7" stroke="#22c" strokeWidth="2" /><Pins n={2} /><Pins x={17} n={2} /></>,
  <><Top fill="#fff" w={17} /><Wave c="#33c" y={3} /><Wave c="#d44" y={6} /><path d="M21 0v7M18 3h6" stroke="#d22" strokeWidth="1.500" /><Pins n={2} /></>,
  <><Top fill="#bfe0c0" w={17} /><Wave c="#15703a" y={3} /><Wave c="#c84" y={6} /><path d="M21 0v7M18 3h6" stroke="#d22" strokeWidth="1.500" /><Pins n={4} /></>,
  <><Top fill="#105e50" w={16} /><path d="M2 8q4-8 8-2l4 3M10 2l-3 7" stroke="#33d09a" strokeWidth="1.500" fill="none" /><path d="M21 1v8" stroke="#222" strokeDasharray="2 1.500" strokeWidth="2" /><Pins n={4} /></>,
  <><Top /><text x="2" y="9.500" fontSize="11" fontWeight="700" fill="#33d233" fontFamily={ARIAL} textLength="20">123</text><path d="M4 14v3M4 19v2M10 14v3M10 19v2" stroke="#222" strokeWidth="1.500" /><Pins x={18} n={1} /></>,
  <><Top /><text x="1" y="9.500" fontSize="11" fontWeight="700" fill="#33d233" fontFamily={ARIAL} textLength="22" lengthAdjust="spacingAndGlyphs">1010</text><path d="M3 13h16M1 20h22" stroke="#222" strokeWidth="2" strokeDasharray="1.500 3" /></>,
  <><Top /><path d="M2 2h5q4 2 0 6h-5M10 4h4" stroke="#4dd" strokeWidth="1.800" fill="none" /><path d="M14 9h4v-4h-4M21 3v6" stroke="#3d3" strokeWidth="2" fill="none" /><path d="M6 13h12M1 20h22" stroke="#222" strokeWidth="2" strokeDasharray="1.500 3" /></>,
  <><rect x="4" y="0" width="19" height="21" fill="#18303a" /><path d="M5 3h17" stroke="#c33" strokeWidth="5" /><path d="M5 9l3-2l3 3l3-3l3 3l4-3" stroke="#4ad" strokeWidth="2" fill="none" /><path d="M5 13h17M5 17h17" stroke="#3c4" strokeWidth="2" /><path d="M1 0v21" stroke="#222" strokeDasharray="2 2" strokeWidth="1.500" /></>,
  <><Top fill="#173a8c" w={16} /><path d="M2 8l5-5l6 4" stroke="#c55" strokeWidth="2" fill="none" /><path d="M21 1v8" stroke="#222" strokeDasharray="2 1.500" strokeWidth="2" /><Pins x={7} n={4} /></>,
  <><Top /><path d="M13 9v-3M16 9v-5M19 9v-7M21 9v-4" stroke="#3d3" strokeWidth="1.600" /><path d="M5 13h8" stroke="#222" strokeWidth="2" strokeDasharray="1.500 3" /><circle cx="19" cy="18" r="2.500" fill="none" stroke="#222" strokeWidth="1.500" /></>,
  <><Top /><path d="M3 9v-4M7 9v-7M11 9v-4M15 9v-6M20 9v-3" stroke="#3d3" strokeWidth="1.800" /><path d="M4 14h6" stroke="#222" strokeWidth="2" strokeDasharray="1.500 3" /><Pins x={14} n={1} /><circle cx="20" cy="18" r="2.500" fill="none" stroke="#222" strokeWidth="1.500" /></>,
  <><Top w={15} /><path d="M2 3h5v5h-4M9 3h4v5h-4M10 5h4" stroke="#3d3" strokeWidth="1.600" fill="none" /><path d="M21 1v8" stroke="#222" strokeDasharray="2 1.500" strokeWidth="2" /><Pins x={14} n={1} /><circle cx="20" cy="18" r="2.500" fill="none" stroke="#222" strokeWidth="1.500" /></>,
  <><Top fill="#1f9a45" /><Wave w={22} c="#0b3a3a" y={3} /><path d="M2 14h6M5 13v8M3 18h4l-2 4z" stroke="#222" /><text x="8" y="22" {...agText}>AG</text></>,
  <><path d="M0 1h15M1 1v8" stroke="#111" strokeWidth="2" /><path d="M4 9q8 1 11-7" stroke="#778" strokeWidth="1.500" fill="none" /><Pins x={20} n={1} y={5} /><path d="M3 14v7" stroke="#222" strokeWidth="1.500" strokeDasharray="1.500 3" /><text x="8" y="22" {...agText}>AG</text></>,
  <><Top fill="#fff" w={16} /><Wave c="#33c" y={2} /><Wave c="#d44" y={6} /><path d="M21 0v8M18 4h6" stroke="#d22" strokeWidth="1.500" /><Pins n={1} /><text x="8" y="22" {...agText}>AG</text></>,
  <><Top fill="#fff" w={16} /><Wave c="#33c" y={2} /><Wave c="#d44" y={6} /><path d="M21 0v8M18 4h6" stroke="#d22" strokeWidth="1.500" /><Pins n={1} /><text x="8" y="22" {...agText}>TK</text></>,
];

/* ---------- call control drawings ---------- */
const Ctl = ({ children, w = 30 }) => (
  <svg width={w} height="30" viewBox="0 0 30 30" fill="none" stroke="#fff" strokeWidth="1.800" strokeLinecap="round" strokeLinejoin="round">{children}</svg>
);

export default function App() {
  return (
    <Screen>
      <Global />
      <Banner>
        <svg width="18" height="17" viewBox="0 0 18 17">
          <path d="M9 0.500L17.500 15.500q0 1-1 1h-15q-1 0-1-1z" fill="#fff" />
          <path d="M9 5.500v5.500M9 12.500v2" stroke="#31385e" strokeWidth="1.800" />
        </svg>
        <BannerText>
          <Label size={17.5} weight={700} width={184}>Recording has started.</Label>
          <Label size={17.5} width={757}>This meeting is being recorded. By joining, you are giving consent for this meeting to be recorded.</Label>
          <LinkLabel size={17.5} width={105}>Privacy policy</LinkLabel>
        </BannerText>
        <Dismiss><Label size={17} weight={600} width={60}>Dismiss</Label></Dismiss>
      </Banner>

      <ShareFrame>
        <AppWindow>
          <TitleBar>
            <Icon name="app" size={22} />
            <TitleText><Label size={17} width={523}>CE_AMPLIFIER_DESIGNED - Multisim - [CE_AMPLIFIER_DESIGNED]</Label></TitleText>
            <WinButtons>
              <WinButton><svg width="20" height="14"><rect x="1.500" y="5.500" width="16" height="7" rx="1" fill="#fff" stroke="#4b5a70" strokeWidth="1.500" /></svg></WinButton>
              <WinButton>
                <svg width="22" height="20" fill="#fff" stroke="#4b5a70" strokeWidth="1.400">
                  <path d="M8 1.500h12v11h-12zM12 5.500h4v4h-4z" /><path d="M2 7.500h12v11h-12zM6 11.500h4v4h-4z" fillRule="evenodd" />
                </svg>
              </WinButton>
              <WinButton $close>
                <svg width="20" height="18"><path d="M4 3l12 12M16 3l-12 12" stroke="#59383a" strokeWidth="6" /><path d="M4 3l12 12M16 3l-12 12" stroke="#fff" strokeWidth="3.800" /></svg>
              </WinButton>
            </WinButtons>
          </TitleBar>
          <MenuBar>
            <Icon name="schem" size={25} />
            <Spacer $w={9.5} />
            {menus.map(([name, k, w, tw]) => (
              <MenuItem key={name} $w={w}>
                <Label size={17} width={tw}>{name.slice(0, k)}<u>{name[k]}</u>{name.slice(k + 1)}</Label>
              </MenuItem>
            ))}
            <MdiButtons>
              <SmallButton><svg width="14" height="14"><path d="M2 11.500h10" stroke="#111" strokeWidth="3" /></svg></SmallButton>
              <SmallButton><svg width="16" height="15" fill="none" stroke="#111" strokeWidth="1.600"><path d="M4 6v-4h11v7h-3M4 3h11M1 7h10v6.500h-10zM1 8h10" /></svg></SmallButton>
              <SmallButton><svg width="14" height="14"><path d="M2 1l10 12M12 1l-10 12" stroke="#111" strokeWidth="2.700" /></svg></SmallButton>
            </MdiButtons>
          </MenuBar>

          <ToolRow $h={41}>
            <ToolGroup $w={421}><Tools start={8} items={standard} /></ToolGroup>
            <ToolGroup $w={860}><Tools start={429} items={viewTools} /></ToolGroup>
            <ToolGroup $w={186} $ml={65}><Tools start={1354} items={zoomTools} /></ToolGroup>
            <ToolGroup $w={87} $ml={12}><Tools start={1552} items={wireTools} /></ToolGroup>
          </ToolRow>
          <ToolRow $h={40}>
            <ToolGroup $w={711}><Tools start={8} items={components} /></ToolGroup>
            <ToolGroup $w={321}>
              <Tools start={719} items={simTools} />
              <Label size={17} width={82}>Interactive</Label>
            </ToolGroup>
            <ToolGroup $w={288}><Tools start={1040} items={probeTools} /></ToolGroup>
          </ToolRow>

          <Body>
            <LeftDock>
              <SmallButton $w={21} $h={20} $ml={4}><svg width="10" height="10"><path d="M1 1l7 8M8 1l-7 8" stroke="#111" strokeWidth="2.200" /></svg></SmallButton>
              <DockPanel>
                <svg width="18" height="26" viewBox="0 0 18 26">
                  <path d="M0 3h7v4h5v5M0 8h9" stroke="#77751a" strokeWidth="2" fill="none" />
                  <circle cx="3" cy="17" r="7.500" fill="#f1ec3a" stroke="#26265c" strokeWidth="1.600" /><path d="M3 12v5h5" stroke="#222" strokeWidth="1.500" fill="none" />
                  <path d="M13 8v17" stroke="#bdb830" strokeWidth="2" />
                </svg>
                <DockList>
                  <DockLine $ml={-4}>sign</DockLine><DockLine $ml={3}>D</DockLine><DockLine $ml={1}>A</DockLine><DockLine $ml={3}>C</DockLine>
                </DockList>
              </DockPanel>
              <SmallButton $w={23} $h={23} $mt={6}><svg width="8" height="10"><path d="M1 1l5 4l-5 4z" fill="#777" /></svg></SmallButton>
            </LeftDock>

            <Center>
              <MdiFrame>
                <MdiInner>
                  <Canvas><Schematic /></Canvas>
                  <VScroll>
                    <svg width="10" height="7"><path d="M0 7l5-6l5 6z" fill="#444" /></svg>
                    <VThumb><svg width="10" height="11"><path d="M0 1.500h10M0 5.500h10M0 9.500h10" stroke="#666" strokeWidth="1.800" /></svg></VThumb>
                    <svg width="10" height="7"><path d="M0 0h10l-5 6z" fill="#444" /></svg>
                  </VScroll>
                  <HScroll>
                    <svg width="7" height="10"><path d="M6 0v10l-6-5z" fill="#444" /></svg>
                    <HThumb><svg width="12" height="11"><path d="M1.500 0v10M5.500 0v10M9.500 0v10" stroke="#666" strokeWidth="1.800" /></svg></HThumb>
                    <svg width="6" height="11"><path d="M0 0v11l5-5.500z" fill="#444" /></svg>
                  </HScroll>
                </MdiInner>
              </MdiFrame>
              <Tabs>
                <DocTab $w={105}><Icon name="schem" size={25} /><Label size={17.5} width={65}>Design1</Label></DocTab>
                <DocTab $w={256} $active><Icon name="schem" size={25} /><Label size={17} width={216}>CE_AMPLIFIER_DESIGNED *</Label></DocTab>
                <Spacer $w={1427} />
                <SmallButton $w={23} $h={23} $mt={6}><Icon name="cascade" size={19} /></SmallButton>
              </Tabs>
            </Center>

            <RightBar>
              {instruments.map((art, i) => <Instrument key={i}><IconSvg width="24" height="23" viewBox="0 0 24 23">{art}</IconSvg></Instrument>)}
              <Rule $m="2px 0 14px" />
              <svg width="26" height="24" viewBox="0 0 26 24">
                <rect x="3" y="1" width="20" height="21" fill="#10201c" /><path d="M3 5h20M3 10h20M3 19h20" stroke="#2d6a62" strokeWidth="1.500" />
                <path d="M8 5v14l12-7z" fill="#ffd91a" /><path d="M0 9h6M20 12h6" stroke="#e33" strokeWidth="1.500" /><path d="M0 15h6" stroke="#33c" strokeWidth="1.500" /><path d="M10 12h5M12.500 9.500v5" stroke="#111" strokeWidth="1.500" />
              </svg>
              <Spacer $w={4} $h={7} />
              <svg width="6" height="10"><path d="M0 0v9l5-4.500z" fill="#111" /></svg>
              <Rule $m="10px 0 46px" />
              <svg width="10" height="13"><path d="M1 1l4 4l4-4M1 7l4 4l4-4" stroke="#111" strokeWidth="2.200" fill="none" /></svg>
            </RightBar>
          </Body>

          <Sheet>
            <SheetDock>
              <SmallButton $w={21} $h={21}><svg width="10" height="10"><path d="M1 1l7 8M8 1l-7 8" stroke="#111" strokeWidth="2.200" /></svg></SmallButton>
              <SmallButton $w={21} $h={21} $mt={4}><svg width="7" height="8"><path d="M1 1l4 3l-4 3z" fill="#999" /></svg></SmallButton>
              <SheetCaption>Spre</SheetCaption>
            </SheetDock>
            <SheetMain>
              <Output><Label size={17} width={475}>Multisim  -  Wednesday, September 09, 2020, 10:32:42 AM</Label></Output>
              <SheetTabs>
                <SheetTab $w={70} $pl={7} $active><Label size={17} width={54}>Results</Label></SheetTab>
                <SheetTab $w={55} $pl={5}><Label size={17} width={36}>Nets</Label></SheetTab>
                <SheetTab $w={111} $pl={6}><Label size={17} width={97}>Components</Label></SheetTab>
                <SheetTab $w={116} $pl={6}><Label size={17} width={102}>Copper layers</Label></SheetTab>
                <SheetTab $w={92} $pl={6}><Label size={17} width={77}>Simulation</Label></SheetTab>
              </SheetTabs>
            </SheetMain>
          </Sheet>
          <Status>
            <StatusInner>
              <StatusCell $w={1095}><StatusText size={17} width={147}>For Help, press F1</StatusText></StatusCell>
              <StatusCell $w={202}><Dash weight={700}>-</Dash></StatusCell>
              <StatusCell $w={257} $line />
              <StatusCell $w={200} $line $pl={8}><Dash weight={700}>-</Dash></StatusCell>
            </StatusInner>
          </Status>
        </AppWindow>
      </ShareFrame>

      <Presenter><Label size={14.5} width={166}>Prof. Rajesh B. Ghongade</Label></Presenter>

      <CallShadow />
      <CallBar>
        <Recorder>
          <svg width="20" height="20"><circle cx="10" cy="10" r="8.600" fill="none" stroke="#fff" strokeWidth="1.600" /><circle cx="10" cy="10" r="6.300" fill="#c4314b" /></svg>
          <Label size={17.5} width={43}>35:35</Label>
        </Recorder>
        <CallButtons $w={260} $bg="#434343" $cols="65px 64px 66px 65px">
          <Ctl><path d="M2.500 7h16v16h-16zM20 12l7.500-4.500v15l-7.500-4.500z" fill="#fff" /><path d="M3 28L27 2" stroke="#434343" strokeWidth="5" /><path d="M2.500 27.500L27.500 2.500" /></Ctl>
          <Ctl><rect x="11" y="3" width="9" height="16" rx="4.500" fill="#fff" /><path d="M7 15q0 8 8.500 8t8.500-8M15.500 23v5" /><path d="M4 27L27 3" stroke="#434343" strokeWidth="4.500" /><path d="M3 27.500L27.500 2.500" /></Ctl>
          <Ctl><g stroke="#888"><rect x="2.500" y="4.500" width="25" height="19" rx="1.500" /><path d="M15 26v-14M10 16l5-5.500l5 5.500" strokeWidth="3.200" stroke="#929292" /></g></Ctl>
          <Ctl><g fill="#fff" stroke="none"><circle cx="4.500" cy="15" r="3.600" /><circle cx="15" cy="15" r="3.600" /><circle cx="25.500" cy="15" r="3.600" /></g></Ctl>
        </CallButtons>
        <CallButtons $w={195} $bg="#3b3b3b" $cols="61px 74px 52px">
          <Ctl><path d="M8.500 18v-10q1.500-2 3 0v6v-9q1.700-2 3.300 0v8.500v-10q1.700-2 3.300 0v10.500v-8q1.700-2 3.300 0v11l3-3.500q2.500-1 2 1.500l-6 9.500q-1.500 2-5 2q-6 0-7-7z" strokeWidth="1.700" /></Ctl>
          <Ctl><path d="M5 7h20v20l-6-5h-14z" /><path d="M9 12.500h9M9 16.500h7" /><circle cx="24.500" cy="4.500" r="5" fill="#e97548" stroke="#e97548" /></Ctl>
          <Ctl><circle cx="9" cy="11" r="3.600" /><circle cx="20.500" cy="6.500" r="3.700" /><path d="M12 18h-7v6q0 3 3.500 3.500h3M15 14h11.500v10q0 4-5.500 4t-6-4z" /></Ctl>
        </CallButtons>
        <CallButtons $w={65} $bg="#9c2f44" $cols="65px">
          <Ctl><path d="M3 18q-1-3 2-5q10-7 20 0q3 2 2 5q0 2-2 1.500l-4-1q-1.500-.5-1.500-3q-4.500-1.500-9 0q0 2.500-1.500 3l-4 1q-2 .5-2-1.500z" fill="#fff" stroke="none" /></Ctl>
        </CallButtons>
      </CallBar>

      <Participant>
        <Avatar><AvatarFace><Label size={22.500} weight={600} width={28}>PG</Label></AvatarFace></Avatar>
        <TileName size={15} width={166}>Prof. Rajesh B. Ghongade</TileName>
      </Participant>
    </Screen>
  );
}
